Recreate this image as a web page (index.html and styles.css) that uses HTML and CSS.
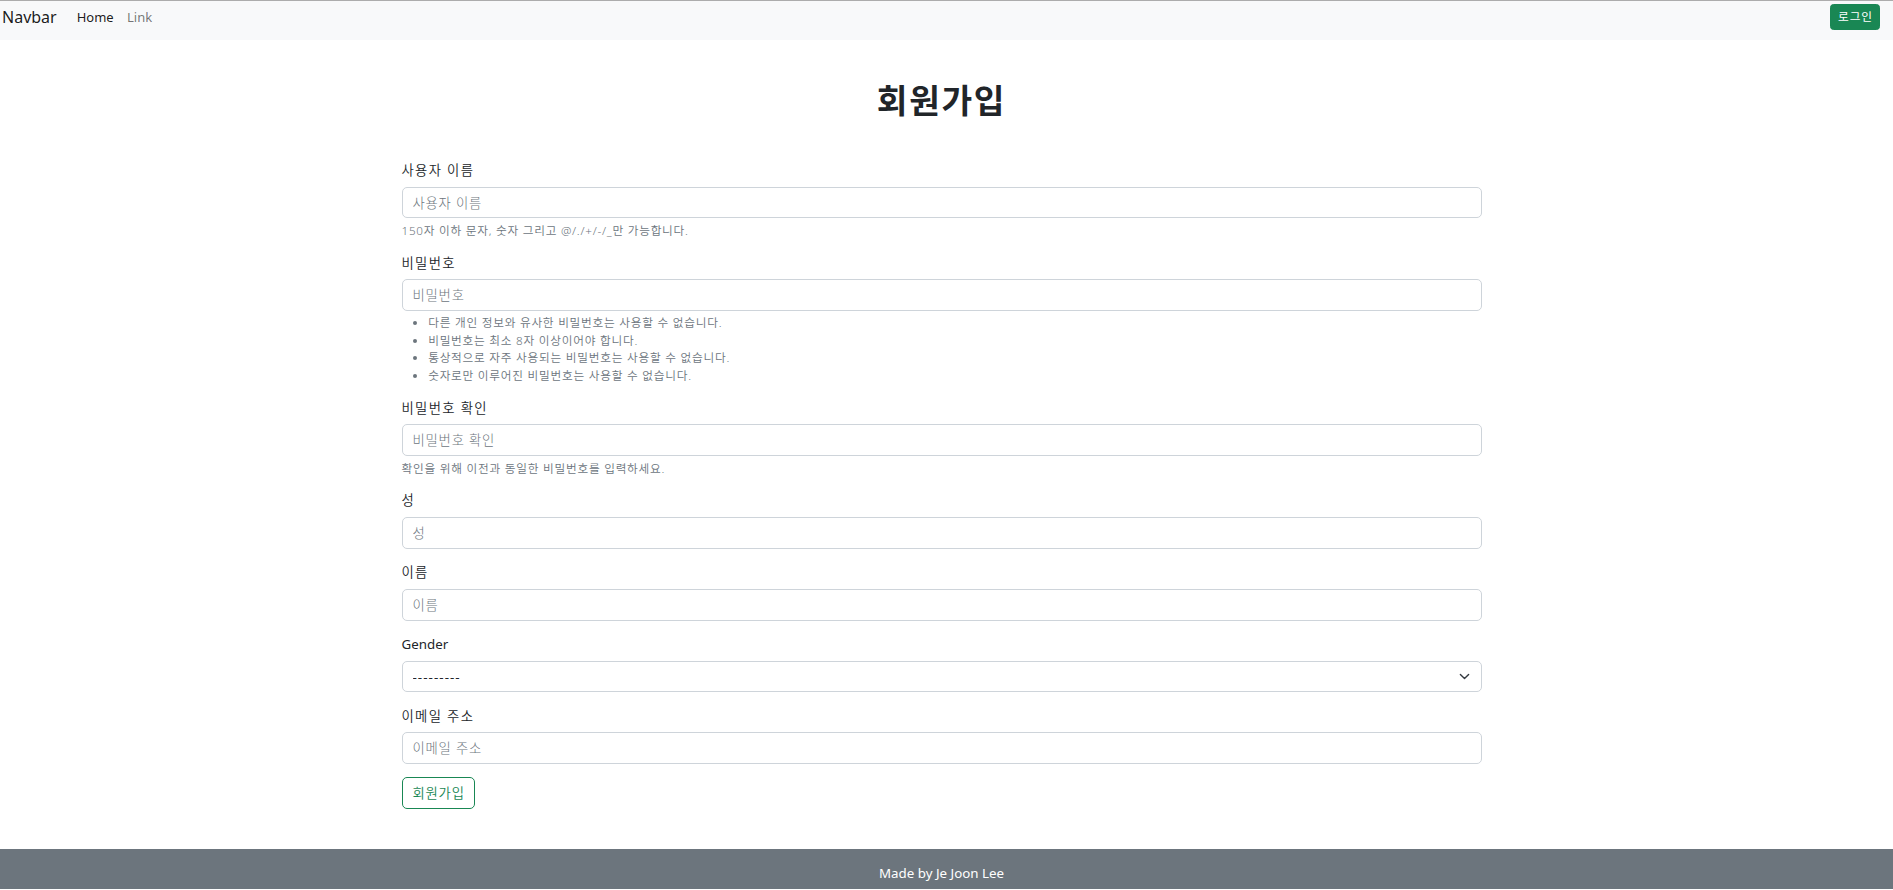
FILE: index.html
```html
<!DOCTYPE html>
<html lang="ko">
<head>
<meta charset="utf-8">
<title>회원가입</title>
<link rel="stylesheet" href="styles.css">
</head>
<body>
<nav class="navbar">
  <a class="brand" href="#">Navbar</a>
  <ul class="nav">
    <li><a class="nav-link active" href="#">Home</a></li>
    <li><a class="nav-link" href="#">Link</a></li>
  </ul>
  <a class="btn-login" href="#">로그인</a>
</nav>

<main class="container">
  <h1 class="title">회원가입</h1>
  <form class="form">
    <div class="field">
      <label class="label">사용자 이름</label>
      <input class="control" type="text" placeholder="사용자 이름">
      <div class="help">150자 이하 문자, 숫자 그리고 @/./+/-/_만 가능합니다.</div>
    </div>
    <div class="field">
      <label class="label">비밀번호</label>
      <input class="control" type="password" placeholder="비밀번호">
      <div class="help">
        <ul class="help-list">
          <li>다른 개인 정보와 유사한 비밀번호는 사용할 수 없습니다.</li>
          <li>비밀번호는 최소 8자 이상이어야 합니다.</li>
          <li>통상적으로 자주 사용되는 비밀번호는 사용할 수 없습니다.</li>
          <li>숫자로만 이루어진 비밀번호는 사용할 수 없습니다.</li>
        </ul>
      </div>
    </div>
    <div class="field">
      <label class="label">비밀번호 확인</label>
      <input class="control" type="password" placeholder="비밀번호 확인">
      <div class="help">확인을 위해 이전과 동일한 비밀번호를 입력하세요.</div>
    </div>
    <div class="field">
      <label class="label">성</label>
      <input class="control" type="text" placeholder="성">
    </div>
    <div class="field">
      <label class="label">이름</label>
      <input class="control" type="text" placeholder="이름">
    </div>
    <div class="field">
      <label class="label latin">Gender</label>
      <div class="select-wrap">
        <select class="control select">
          <option>---------</option>
          <option>Male</option>
          <option>Female</option>
        </select>
        <svg class="chevron" viewBox="0 0 16 16" width="11" height="11"><path d="M2 5l6 6 6-6" fill="none" stroke="#343a40" stroke-width="2" stroke-linecap="round" stroke-linejoin="round"/></svg>
      </div>
    </div>
    <div class="field">
      <label class="label">이메일 주소</label>
      <input class="control" type="email" placeholder="이메일 주소">
    </div>
    <button class="btn-submit" type="submit">회원가입</button>
  </form>
</main>

<footer class="footer">
  <div class="footer-inner">Made by Je Joon Lee</div>
</footer>
</body>
</html>
```

FILE: styles.css
```css
* { box-sizing: border-box; }

html, body {
  margin: 0;
  padding: 0;
}

body {
  font-family: "Noto Sans", "Noto Sans CJK KR", sans-serif;
  font-size: 13.333px;
  line-height: 1.5;
  color: #212529;
  background: #fff;
}

a { text-decoration: none; }

.navbar {
  display: flex;
  align-items: center;
  height: 40px;
  padding: 0 13px 7px 2px;
  background: #f8f9fa;
  border-top: 1px solid #acacac;
}

.brand {
  font-size: 16px;
  line-height: 25px;
  color: rgba(0, 0, 0, 0.9);
  margin-right: 13.333px;
}

.nav {
  display: flex;
  list-style: none;
  margin: 0;
  padding: 0;
  flex: 1;
}

.nav-link {
  display: block;
  padding: 0 6.667px;
  font-size: 13px;
  line-height: 20px;
  color: rgba(0, 0, 0, 0.55);
}

.nav-link.active {
  color: rgba(0, 0, 0, 0.9);
}

.btn-login {
  display: inline-block;
  font-size: 11.667px;
  line-height: 17.5px;
  letter-spacing: 0.08em;
  padding: 3.33px 6px 3.33px 7px;
  border: 1px solid #198754;
  border-radius: 3.5px;
  background: #198754;
  color: #fff;
}

.container {
  width: 1080px;
  margin-left: calc(50% - 545px);
}

.title {
  margin: 40px 0;
  font-size: 33.333px;
  line-height: 40px;
  font-weight: 700;
  letter-spacing: 0.05em;
  text-align: center;
  color: #212529;
}

.field {
  margin-bottom: 13.333px;
}

.label {
  display: block;
  margin-bottom: 6.667px;
  line-height: 20px;
  letter-spacing: 0.1em;
  font-weight: 350;
  color: #212529;
}

.label.latin {
  letter-spacing: 0;
  font-weight: 400;
}

.control {
  display: block;
  width: 100%;
  height: 31.8px;
  padding: 5px 10px;
  font-family: inherit;
  font-size: 13.333px;
  line-height: 20px;
  letter-spacing: 0.06em;
  font-weight: 300;
  color: #212529;
  background: #fff;
  border: 1px solid #ced4da;
  border-radius: 5px;
  outline: none;
}

.control::placeholder {
  color: #6c757d;
  opacity: 1;
}

.select-wrap {
  position: relative;
}

.select {
  appearance: none;
  -webkit-appearance: none;
  padding-right: 30px;
  letter-spacing: 0.08em;
  font-weight: 400;
}

.chevron {
  position: absolute;
  right: 12px;
  top: 10.5px;
  pointer-events: none;
}

.help {
  margin-top: 3.333px;
  font-size: 11.667px;
  line-height: 17.5px;
  letter-spacing: 0.065em;
  font-weight: 350;
  color: #6c757d;
}

.help-list {
  margin: 0;
  padding-left: 26.667px;
}

.btn-submit {
  display: inline-block;
  font-family: inherit;
  font-size: 13.333px;
  line-height: 20px;
  letter-spacing: 0.06em;
  font-weight: 350;
  padding: 5px 9px 5px 10px;
  color: #198754;
  background: transparent;
  border: 1px solid #198754;
  border-radius: 5px;
  cursor: pointer;
}

.footer {
  margin-top: 40px;
  background: #6c757d;
  color: #fff;
  padding: 13.333px 0 6.5px;
}

.footer-inner {
  width: 1080px;
  margin-left: calc(50% - 545px);
  text-align: center;
  line-height: 20px;
}
```
